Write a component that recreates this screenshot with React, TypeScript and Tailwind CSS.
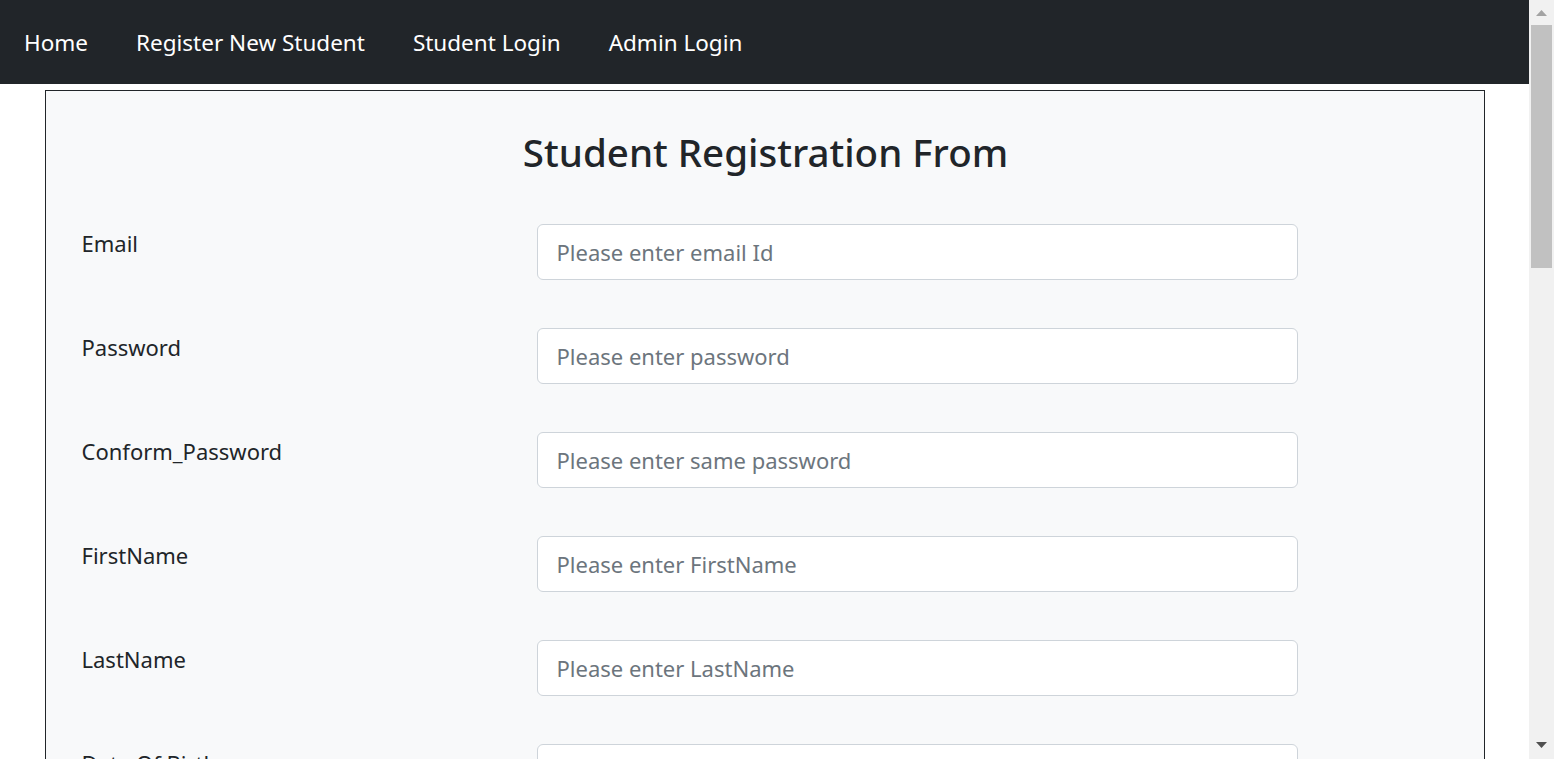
import React from "react";

const fields: { label: string; placeholder: string; type?: string }[] = [
  { label: "Email", placeholder: "Please enter email Id" },
  { label: "Password", placeholder: "Please enter password", type: "password" },
  { label: "Conform_Password", placeholder: "Please enter same password", type: "password" },
  { label: "FirstName", placeholder: "Please enter FirstName" },
  { label: "LastName", placeholder: "Please enter LastName" },
  { label: "Date Of Birth", placeholder: "" },
  { label: "Gender", placeholder: "Please enter gender" },
  { label: "Mobile Number", placeholder: "Please enter mobile number" },
];

export default function App() {
  return (
    <div
      className="flex h-screen overflow-hidden bg-white text-[#212529]"
      style={{ fontFamily: "'Noto Sans', 'Open Sans', sans-serif" }}
    >
      <div className="min-w-0 flex-1 overflow-hidden">
        <nav className="flex h-[84px] items-center bg-[#212529]">
          {["Home", "Register New Student", "Student Login", "Admin Login"].map((t) => (
            <a key={t} href="#" className="px-6 pt-[2px] text-[22.5px] leading-[36px] text-white">
              {t}
            </a>
          ))}
        </nav>
        <div className="mx-auto mt-[6px] w-[1440px] border border-[#212529] bg-[#f8f9fa] pb-12">
          <h1 className="pt-[37px] pl-[2px] text-center text-[38.5px] leading-[48px] font-medium">Student Registration From</h1>
          <div className="mt-[48px] flex flex-col gap-[48px]">
            {fields.map((f) => (
              <div key={f.label} className="flex">
                <label className="w-[491px] pl-[36px] pt-[3px] text-[22px] leading-[33px]">{f.label}</label>
                <input
                  type={f.type ?? "text"}
                  placeholder={f.placeholder}
                  className="h-[56px] w-[761px] rounded-[6px] border border-[#ced4da] bg-white px-[19px] text-[22px] text-[#212529] outline-none placeholder:text-[#6c757d]"
                />
              </div>
            ))}
          </div>
        </div>
      </div>
      <div className="flex w-[25px] shrink-0 flex-col bg-[#f1f1f1]">
        <div className="flex h-[25px] items-start justify-center pt-[10px]">
          <svg width="11" height="6" viewBox="0 0 11 6">
            <polygon points="5.5,0 11,6 0,6" fill="#a3a3a3" />
          </svg>
        </div>
        <div className="mx-[2px] h-[243px] bg-[#c1c1c1]" />
        <div className="flex-1" />
        <div className="flex h-[25px] items-start justify-center pt-[8px]">
          <svg width="11" height="6" viewBox="0 0 11 6">
            <polygon points="0,0 11,0 5.5,6" fill="#505050" />
          </svg>
        </div>
      </div>
    </div>
  );
}
